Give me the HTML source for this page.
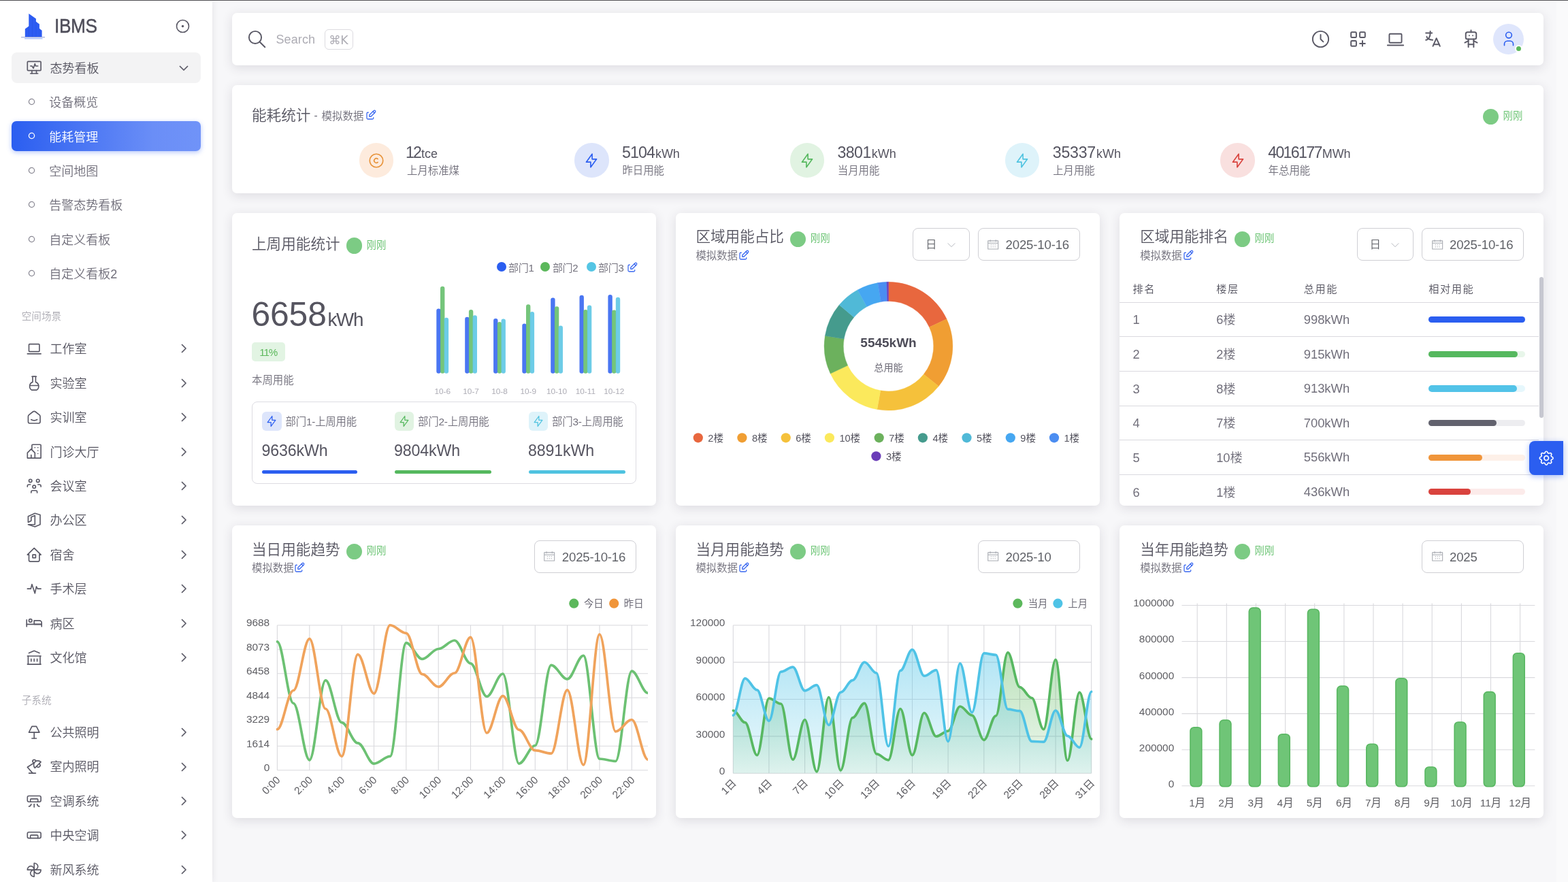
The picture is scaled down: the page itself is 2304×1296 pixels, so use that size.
<!DOCTYPE html>
<html lang="zh-CN"><head><meta charset="utf-8"><title>IBMS</title><style>
*{box-sizing:border-box;margin:0;padding:0}
html,body{width:2304px;height:1296px;overflow:hidden}
body{background:#f7f7f9;font-family:"Liberation Sans","Noto Sans CJK SC",sans-serif;color:#4e4d59;position:relative;font-weight:350}
#root{position:absolute;left:0;top:0;width:2304px;height:1296px;will-change:transform;transform:translateZ(0)}
.a{position:absolute;white-space:nowrap}
.card{position:absolute;background:#fff;border-radius:7.2px;box-shadow:0 3.6px 16px rgba(47,43,61,.125)}
svg{position:absolute;overflow:visible}
.t{position:absolute;white-space:nowrap}
.dot{position:absolute;border-radius:50%}
.fld{position:absolute;border:1.2px solid #cfcfd4;border-radius:8px;background:#fff;height:47.5px}
.cht text{font-family:"Liberation Sans","Noto Sans CJK SC",sans-serif;font-size:15.4px;fill:#5e5e63;font-weight:400}
</style></head><body><div id="root">
<div class="a" style="left:0;top:0;width:2304px;height:1.1px;background:#4f4e52"></div><div class="a" style="left:0;top:1.1px;width:2304px;height:1.1px;background:#fdfdfe"></div>
<div class="a" style="left:2286.6px;top:2.2px;width:17.4px;height:1294px;background:#fafafb"></div>
<div class="a" style="left:0;top:1px;width:312px;height:1295px;background:#fff;box-shadow:0 0 10px rgba(47,43,61,.10)"></div>
<svg style="left:30px;top:18px" width="38" height="40" viewBox="0 0 38 40"><path d="M6.8 36.4V24.5L12.3 20.6V2.1L22.9 9.5V13.8L27.9 17.5V24.1L31.6 26.7V36.4z" fill="#2d5cf2"/><path d="M12.3 20.6V36.4M17.5 8V36.4M22.9 13.8V36.4M27.9 24V36.4" stroke="#2450dd" stroke-width=".7" fill="none" opacity=".6"/><path d="M1 36.7h35" stroke="#8c9bd6" stroke-width="1.1" fill="none"/><path d="M6 38.8h26.5" stroke="#8aa8f7" stroke-width="1" fill="none"/></svg>
<div class="t" style="left:79.6px;top:18.3px;font-size:29.6px;line-height:40px;color:#4f4e5a;letter-spacing:-.45px;transform:scaleX(.888);transform-origin:0 50%;-webkit-text-stroke:.5px #4f4e5a;">IBMS</div>
<svg style="left:258px;top:28px" width="21" height="21" viewBox="0 0 21 21"><circle cx="10.5" cy="10.5" r="9" fill="none" stroke="#5a5966" stroke-width="1.6"/><circle cx="10.5" cy="10.5" r="1.7" fill="#5a5966"/></svg>
<div class="a" style="left:17px;top:77px;width:278px;height:44.5px;border-radius:8px;background:#f3f3f4"></div>
<svg style="left:36.8px;top:85.8px" width="26.4" height="26.4" viewBox="0 0 24 24" fill="none" stroke="#5a5966" stroke-width="1.5" stroke-linecap="round" stroke-linejoin="round"><path d="M3 5a1 1 0 0 1 1 -1h16a1 1 0 0 1 1 1v10a1 1 0 0 1 -1 1h-16a1 1 0 0 1 -1 -1z"/><path d="M7 20h10"/><path d="M9 16v4"/><path d="M15 16v4"/><path d="M7 10h2l2 3l2 -6l1 3h3"/></svg>
<div class="t" style="left:73.5px;top:87.7px;font-size:18px;line-height:27px;color:#565561;">态势看板</div>
<svg style="left:258.0px;top:87.5px" width="24" height="24" viewBox="0 0 24 24" fill="none" stroke="#5a5966" stroke-width="1.7" stroke-linecap="butt" stroke-linejoin="round"><path d="M6 9l6 6l6 -6"/></svg>
<svg style="left:39.5px;top:143.0px" width="13" height="13" viewBox="0 0 13 13"><circle cx="6.5" cy="6.5" r="4.1" fill="none" stroke="#8b8a95" stroke-width="1.3"/></svg>
<div class="t" style="left:72.3px;top:138.2px;font-size:18px;line-height:27px;color:#716f7b;">设备概览</div>
<div class="a" style="left:17px;top:177.7px;width:278px;height:44.6px;border-radius:7px;background:linear-gradient(270deg,#7093f8 0%,#6a8ef7 25%,#2b5ef0 100%);box-shadow:0 2px 7px rgba(45,95,242,.35)"></div>
<svg style="left:39.5px;top:193.4px" width="13" height="13" viewBox="0 0 13 13"><circle cx="6.5" cy="6.5" r="4.1" fill="none" stroke="#fff" stroke-width="1.3"/></svg>
<div class="t" style="left:72.3px;top:188.6px;font-size:18px;line-height:27px;color:#fff;">能耗管理</div>
<svg style="left:39.5px;top:243.8px" width="13" height="13" viewBox="0 0 13 13"><circle cx="6.5" cy="6.5" r="4.1" fill="none" stroke="#8b8a95" stroke-width="1.3"/></svg>
<div class="t" style="left:72.3px;top:239.0px;font-size:18px;line-height:27px;color:#716f7b;">空间地图</div>
<svg style="left:39.5px;top:294.2px" width="13" height="13" viewBox="0 0 13 13"><circle cx="6.5" cy="6.5" r="4.1" fill="none" stroke="#8b8a95" stroke-width="1.3"/></svg>
<div class="t" style="left:72.3px;top:289.4px;font-size:18px;line-height:27px;color:#716f7b;">告警态势看板</div>
<svg style="left:39.5px;top:344.6px" width="13" height="13" viewBox="0 0 13 13"><circle cx="6.5" cy="6.5" r="4.1" fill="none" stroke="#8b8a95" stroke-width="1.3"/></svg>
<div class="t" style="left:72.3px;top:339.8px;font-size:18px;line-height:27px;color:#716f7b;">自定义看板</div>
<svg style="left:39.5px;top:395.0px" width="13" height="13" viewBox="0 0 13 13"><circle cx="6.5" cy="6.5" r="4.1" fill="none" stroke="#8b8a95" stroke-width="1.3"/></svg>
<div class="t" style="left:72.3px;top:390.2px;font-size:18px;line-height:27px;color:#716f7b;">自定义看板2</div>
<div class="t" style="left:31.7px;top:454.2px;font-size:14.6px;line-height:22px;color:#adacb4;">空间场景</div>
<svg style="left:37.0px;top:499.2px" width="26.4" height="26.4" viewBox="0 0 24 24" fill="none" stroke="#5a5966" stroke-width="1.5" stroke-linecap="round" stroke-linejoin="round"><path d="M3 19l18 0"/><path d="M5 7a1 1 0 0 1 1 -1h12a1 1 0 0 1 1 1v8a1 1 0 0 1 -1 1h-12a1 1 0 0 1 -1 -1z"/></svg>
<div class="t" style="left:73.5px;top:500.3px;font-size:18px;line-height:27px;color:#565561;">工作室</div>
<svg style="left:258.0px;top:500.4px" width="24" height="24" viewBox="0 0 24 24" fill="none" stroke="#5a5966" stroke-width="1.7" stroke-linecap="butt" stroke-linejoin="round"><path d="M9 6l6 6l-6 6"/></svg>
<svg style="left:37.0px;top:549.6px" width="26.4" height="26.4" viewBox="0 0 24 24" fill="none" stroke="#5a5966" stroke-width="1.5" stroke-linecap="round" stroke-linejoin="round"><path d="M6.1 15h11.8"/><path d="M14 3v7.342a6 6 0 0 1 1.318 10.658h-6.635a6 6 0 0 1 1.317 -10.66v-7.34h4z"/><path d="M9 3h6"/></svg>
<div class="t" style="left:73.5px;top:550.7px;font-size:18px;line-height:27px;color:#565561;">实验室</div>
<svg style="left:258.0px;top:550.8px" width="24" height="24" viewBox="0 0 24 24" fill="none" stroke="#5a5966" stroke-width="1.7" stroke-linecap="butt" stroke-linejoin="round"><path d="M9 6l6 6l-6 6"/></svg>
<svg style="left:37.0px;top:600.0px" width="26.4" height="26.4" viewBox="0 0 24 24" fill="none" stroke="#5a5966" stroke-width="1.5" stroke-linecap="round" stroke-linejoin="round"><path d="M19 8.71l-5.333 -4.148a2.666 2.666 0 0 0 -3.274 0l-5.334 4.148a2.665 2.665 0 0 0 -1.029 2.105v7.2a2 2 0 0 0 2 2h12a2 2 0 0 0 2 -2v-7.2c0 -.823 -.38 -1.6 -1.03 -2.105"/><path d="M16 15c-2.21 1.333 -5.792 1.333 -8 0"/></svg>
<div class="t" style="left:73.5px;top:601.1px;font-size:18px;line-height:27px;color:#565561;">实训室</div>
<svg style="left:258.0px;top:601.2px" width="24" height="24" viewBox="0 0 24 24" fill="none" stroke="#5a5966" stroke-width="1.7" stroke-linecap="butt" stroke-linejoin="round"><path d="M9 6l6 6l-6 6"/></svg>
<svg style="left:37.0px;top:650.4px" width="26.4" height="26.4" viewBox="0 0 24 24" fill="none" stroke="#5a5966" stroke-width="1.5" stroke-linecap="round" stroke-linejoin="round"><path d="M8 9l5 5v7h-5v-4m0 4h-5v-7l5 -5m1 1v-6a1 1 0 0 1 1 -1h10a1 1 0 0 1 1 1v17h-8"/><path d="M13 7l0 .01"/><path d="M17 7l0 .01"/><path d="M17 11l0 .01"/><path d="M17 15l0 .01"/></svg>
<div class="t" style="left:73.5px;top:651.5px;font-size:18px;line-height:27px;color:#565561;">门诊大厅</div>
<svg style="left:258.0px;top:651.6px" width="24" height="24" viewBox="0 0 24 24" fill="none" stroke="#5a5966" stroke-width="1.7" stroke-linecap="butt" stroke-linejoin="round"><path d="M9 6l6 6l-6 6"/></svg>
<svg style="left:37.0px;top:700.8px" width="26.4" height="26.4" viewBox="0 0 24 24" fill="none" stroke="#5a5966" stroke-width="1.5" stroke-linecap="round" stroke-linejoin="round"><path d="M10 13a2 2 0 1 0 4 0a2 2 0 0 0 -4 0"/><path d="M8 21v-1a2 2 0 0 1 2 -2h4a2 2 0 0 1 2 2v1"/><path d="M15 5a2 2 0 1 0 4 0a2 2 0 0 0 -4 0"/><path d="M17 10h2a2 2 0 0 1 2 2v1"/><path d="M5 5a2 2 0 1 0 4 0a2 2 0 0 0 -4 0"/><path d="M3 13v-1a2 2 0 0 1 2 -2h2"/></svg>
<div class="t" style="left:73.5px;top:701.9px;font-size:18px;line-height:27px;color:#565561;">会议室</div>
<svg style="left:258.0px;top:702.0px" width="24" height="24" viewBox="0 0 24 24" fill="none" stroke="#5a5966" stroke-width="1.7" stroke-linecap="butt" stroke-linejoin="round"><path d="M9 6l6 6l-6 6"/></svg>
<svg style="left:37.0px;top:751.2px" width="26.4" height="26.4" viewBox="0 0 24 24" fill="none" stroke="#5a5966" stroke-width="1.5" stroke-linecap="round" stroke-linejoin="round"><path d="M4 18h9v-12l-5 2v5l-4 2v-8l9 -4l7 2v13l-7 3z"/></svg>
<div class="t" style="left:73.5px;top:752.3px;font-size:18px;line-height:27px;color:#565561;">办公区</div>
<svg style="left:258.0px;top:752.4px" width="24" height="24" viewBox="0 0 24 24" fill="none" stroke="#5a5966" stroke-width="1.7" stroke-linecap="butt" stroke-linejoin="round"><path d="M9 6l6 6l-6 6"/></svg>
<svg style="left:37.0px;top:801.6px" width="26.4" height="26.4" viewBox="0 0 24 24" fill="none" stroke="#5a5966" stroke-width="1.5" stroke-linecap="round" stroke-linejoin="round"><path d="M5 12l-2 0l9 -9l9 9l-2 0"/><path d="M5 12v7a2 2 0 0 0 2 2h10a2 2 0 0 0 2 -2v-7"/><path d="M10 12h4v4h-4z"/></svg>
<div class="t" style="left:73.5px;top:802.7px;font-size:18px;line-height:27px;color:#565561;">宿舍</div>
<svg style="left:258.0px;top:802.8px" width="24" height="24" viewBox="0 0 24 24" fill="none" stroke="#5a5966" stroke-width="1.7" stroke-linecap="butt" stroke-linejoin="round"><path d="M9 6l6 6l-6 6"/></svg>
<svg style="left:37.0px;top:852.0px" width="26.4" height="26.4" viewBox="0 0 24 24" fill="none" stroke="#5a5966" stroke-width="1.5" stroke-linecap="round" stroke-linejoin="round"><path d="M3 12h4.5l1.5 -6l4 12l2 -9l1.5 3h4.5"/></svg>
<div class="t" style="left:73.5px;top:853.1px;font-size:18px;line-height:27px;color:#565561;">手术层</div>
<svg style="left:258.0px;top:853.2px" width="24" height="24" viewBox="0 0 24 24" fill="none" stroke="#5a5966" stroke-width="1.7" stroke-linecap="butt" stroke-linejoin="round"><path d="M9 6l6 6l-6 6"/></svg>
<svg style="left:37.0px;top:902.4px" width="26.4" height="26.4" viewBox="0 0 24 24" fill="none" stroke="#5a5966" stroke-width="1.5" stroke-linecap="round" stroke-linejoin="round"><path d="M5 9a2 2 0 1 0 4 0a2 2 0 1 0 -4 0"/><path d="M22 17v-3h-20"/><path d="M2 8v9"/><path d="M12 14h10v-2a3 3 0 0 0 -3 -3h-7v5z"/></svg>
<div class="t" style="left:73.5px;top:903.5px;font-size:18px;line-height:27px;color:#565561;">病区</div>
<svg style="left:258.0px;top:903.6px" width="24" height="24" viewBox="0 0 24 24" fill="none" stroke="#5a5966" stroke-width="1.7" stroke-linecap="butt" stroke-linejoin="round"><path d="M9 6l6 6l-6 6"/></svg>
<svg style="left:37.0px;top:952.8px" width="26.4" height="26.4" viewBox="0 0 24 24" fill="none" stroke="#5a5966" stroke-width="1.5" stroke-linecap="round" stroke-linejoin="round"><path d="M3 21l18 0"/><path d="M3 10l18 0"/><path d="M5 6l7 -3l7 3"/><path d="M4 10l0 11"/><path d="M20 10l0 11"/><path d="M8 14l0 3"/><path d="M12 14l0 3"/><path d="M16 14l0 3"/></svg>
<div class="t" style="left:73.5px;top:953.9px;font-size:18px;line-height:27px;color:#565561;">文化馆</div>
<svg style="left:258.0px;top:954.0px" width="24" height="24" viewBox="0 0 24 24" fill="none" stroke="#5a5966" stroke-width="1.7" stroke-linecap="butt" stroke-linejoin="round"><path d="M9 6l6 6l-6 6"/></svg>
<div class="t" style="left:31.7px;top:1017.9px;font-size:14.6px;line-height:22px;color:#adacb4;">子系统</div>
<svg style="left:37.0px;top:1062.9px" width="26.4" height="26.4" viewBox="0 0 24 24" fill="none" stroke="#5a5966" stroke-width="1.5" stroke-linecap="round" stroke-linejoin="round"><path d="M9 20h6"/><path d="M12 20v-8"/><path d="M5 12h14l-4 -8h-6z"/></svg>
<div class="t" style="left:73.5px;top:1064.0px;font-size:18px;line-height:27px;color:#565561;">公共照明</div>
<svg style="left:258.0px;top:1064.1px" width="24" height="24" viewBox="0 0 24 24" fill="none" stroke="#5a5966" stroke-width="1.7" stroke-linecap="butt" stroke-linejoin="round"><path d="M9 6l6 6l-6 6"/></svg>
<svg style="left:37.0px;top:1113.3px" width="26.4" height="26.4" viewBox="0 0 24 24" fill="none" stroke="#5a5966" stroke-width="1.5" stroke-linecap="round" stroke-linejoin="round"><path d="M5 21h9"/><path d="M10 21l-7 -8l8.5 -5.5"/><path d="M13 14c-2.148 -2.148 -2.148 -5.852 0 -8c2.088 -2.088 5.842 -1.972 8 0l-8 8z"/><path d="M11.742 7.574l-1.156 -1.156a2 2 0 0 1 2.828 -2.829l1.144 1.144"/><path d="M15.5 12l.208 .274a2.527 2.527 0 0 0 3.556 0c.939 -.933 .98 -2.42 .122 -3.4l-.366 -.369"/></svg>
<div class="t" style="left:73.5px;top:1114.4px;font-size:18px;line-height:27px;color:#565561;">室内照明</div>
<svg style="left:258.0px;top:1114.5px" width="24" height="24" viewBox="0 0 24 24" fill="none" stroke="#5a5966" stroke-width="1.7" stroke-linecap="butt" stroke-linejoin="round"><path d="M9 6l6 6l-6 6"/></svg>
<svg style="left:37.0px;top:1163.7px" width="26.4" height="26.4" viewBox="0 0 24 24" fill="none" stroke="#5a5966" stroke-width="1.5" stroke-linecap="round" stroke-linejoin="round"><path d="M8 16a3 3 0 0 1 -3 3"/><path d="M16 16a3 3 0 0 0 3 3"/><path d="M12 16v4"/><path d="M3 7a2 2 0 0 1 2 -2h14a2 2 0 0 1 2 2v4a2 2 0 0 1 -2 2h-14a2 2 0 0 1 -2 -2z"/><path d="M7 13v-3a1 1 0 0 1 1 -1h8a1 1 0 0 1 1 1v3"/></svg>
<div class="t" style="left:73.5px;top:1164.8px;font-size:18px;line-height:27px;color:#565561;">空调系统</div>
<svg style="left:258.0px;top:1164.9px" width="24" height="24" viewBox="0 0 24 24" fill="none" stroke="#5a5966" stroke-width="1.7" stroke-linecap="butt" stroke-linejoin="round"><path d="M9 6l6 6l-6 6"/></svg>
<svg style="left:37.0px;top:1214.1px" width="26.4" height="26.4" viewBox="0 0 24 24" fill="none" stroke="#5a5966" stroke-width="1.5" stroke-linecap="round" stroke-linejoin="round"><path d="M3 10a2 2 0 0 1 2 -2h14a2 2 0 0 1 2 2v4a2 2 0 0 1 -2 2h-14a2 2 0 0 1 -2 -2z"/><path d="M7 16v-3a1 1 0 0 1 1 -1h8a1 1 0 0 1 1 1v3"/></svg>
<div class="t" style="left:73.5px;top:1215.2px;font-size:18px;line-height:27px;color:#565561;">中央空调</div>
<svg style="left:258.0px;top:1215.3px" width="24" height="24" viewBox="0 0 24 24" fill="none" stroke="#5a5966" stroke-width="1.7" stroke-linecap="butt" stroke-linejoin="round"><path d="M9 6l6 6l-6 6"/></svg>
<svg style="left:37.0px;top:1264.5px" width="26.4" height="26.4" viewBox="0 0 24 24" fill="none" stroke="#5a5966" stroke-width="1.5" stroke-linecap="round" stroke-linejoin="round"><path d="M12 12c2.76 0 5 -2.01 5 -4.5s-2.24 -4.5 -5 -4.5v9z"/><path d="M12 12c0 2.76 2.01 5 4.5 5s4.5 -2.24 4.5 -5h-9z"/><path d="M12 12c-2.76 0 -5 2.01 -5 4.5s2.24 4.5 5 4.5v-9z"/><path d="M12 12c0 -2.76 -2.01 -5 -4.5 -5s-4.5 2.24 -4.5 5h9z"/></svg>
<div class="t" style="left:73.5px;top:1265.6px;font-size:18px;line-height:27px;color:#565561;">新风系统</div>
<svg style="left:258.0px;top:1265.7px" width="24" height="24" viewBox="0 0 24 24" fill="none" stroke="#5a5966" stroke-width="1.7" stroke-linecap="butt" stroke-linejoin="round"><path d="M9 6l6 6l-6 6"/></svg>
<div class="card" style="left:340.8px;top:19.2px;width:1927.2px;height:76.8px"></div>
<svg style="left:362.4px;top:41.7px" width="31.2" height="31.2" viewBox="0 0 24 24" fill="none" stroke="#5a5966" stroke-width="1.5" stroke-linecap="round" stroke-linejoin="round"><path d="M3 10a7 7 0 1 0 14 0a7 7 0 1 0 -14 0"/><path d="M21 21l-6 -6"/></svg>
<div class="t" style="left:405.5px;top:44.5px;font-size:18px;line-height:27px;color:#adacb4;letter-spacing:.1px;">Search</div>
<div class="a" style="left:477px;top:42.5px;width:42px;height:30px;border:1px solid #dcdbe0;border-radius:6px"></div>
<div class="t" style="left:483.3px;top:46.3px;font-size:17px;line-height:26px;color:#adacb4;font-family:'DejaVu Sans','Liberation Sans',sans-serif;font-weight:400;letter-spacing:-.4px;font-size:17.4px;">⌘K</div>
<svg style="left:1925.0px;top:41.9px" width="31" height="31" viewBox="0 0 24 24" fill="none" stroke="#5a5966" stroke-width="1.5" stroke-linecap="round" stroke-linejoin="round"><path d="M3 12a9 9 0 1 0 18 0a9 9 0 0 0 -18 0"/><path d="M12 7v5l3 3"/></svg>
<svg style="left:1980.0px;top:41.9px" width="31" height="31" viewBox="0 0 24 24" fill="none" stroke="#5a5966" stroke-width="1.5" stroke-linecap="round" stroke-linejoin="round"><path d="M4 5a1 1 0 0 1 1 -1h4a1 1 0 0 1 1 1v4a1 1 0 0 1 -1 1h-4a1 1 0 0 1 -1 -1z"/><path d="M14 5a1 1 0 0 1 1 -1h4a1 1 0 0 1 1 1v4a1 1 0 0 1 -1 1h-4a1 1 0 0 1 -1 -1z"/><path d="M4 15a1 1 0 0 1 1 -1h4a1 1 0 0 1 1 1v4a1 1 0 0 1 -1 1h-4a1 1 0 0 1 -1 -1z"/><path d="M14 17h6m-3 -3v6"/></svg>
<svg style="left:2035.2px;top:41.9px" width="31" height="31" viewBox="0 0 24 24" fill="none" stroke="#5a5966" stroke-width="1.5" stroke-linecap="round" stroke-linejoin="round"><path d="M3 19l18 0"/><path d="M5 7a1 1 0 0 1 1 -1h12a1 1 0 0 1 1 1v8a1 1 0 0 1 -1 1h-12a1 1 0 0 1 -1 -1z"/></svg>
<svg style="left:2090.2px;top:41.9px" width="31" height="31" viewBox="0 0 24 24" fill="none" stroke="#5a5966" stroke-width="1.5" stroke-linecap="round" stroke-linejoin="round"><path d="M4 5h7"/><path d="M9 3v2c0 4.418 -2.239 8 -5 8"/><path d="M5 9c0 2.144 2.952 3.908 6.7 4"/><path d="M12 20l4 -9l4 9"/><path d="M19.1 18h-6.2"/></svg>
<svg style="left:2145.8px;top:41.9px" width="31" height="31" viewBox="0 0 24 24" fill="none" stroke="#5a5966" stroke-width="1.5" stroke-linecap="round" stroke-linejoin="round"><path d="M6 6a2 2 0 0 1 2 -2h8a2 2 0 0 1 2 2v4a2 2 0 0 1 -2 2h-8a2 2 0 0 1 -2 -2z"/><path d="M12 2v2"/><path d="M9 12v9"/><path d="M15 12v9"/><path d="M5 16l4 -2"/><path d="M15 14l4 2"/><path d="M9 18h6"/><path d="M10 8v.01"/><path d="M14 8v.01"/></svg>
<div class="dot" style="left:2193.7px;top:34.8px;width:45.6px;height:45.6px;background:#dfe6fc"></div>
<svg style="left:2203.5px;top:44.1px" width="26" height="26" viewBox="0 0 24 24" fill="none" stroke="#2b5ef0" stroke-width="1.5" stroke-linecap="round" stroke-linejoin="round"><path d="M8 7a4 4 0 1 0 8 0a4 4 0 0 0 -8 0"/><path d="M6 21v-2a4 4 0 0 1 4 -4h4a4 4 0 0 1 4 4v2"/></svg>
<div class="dot" style="left:2225.5px;top:66.2px;width:11px;height:11px;background:#5cb85c;border:2px solid #fff"></div>
<div class="card" style="left:340.8px;top:124.8px;width:1927.2px;height:158.8px"></div>
<div class="t" style="left:370.0px;top:153.9px;font-size:21.6px;line-height:32px;color:#565561;">能耗统计</div>
<div class="t" style="left:461.5px;top:158.0px;font-size:15.6px;line-height:23px;color:#716f7b;">-</div>
<div class="t" style="left:472.6px;top:158.8px;font-size:15.5px;line-height:23px;color:#716f7b;">模拟数据</div>
<svg style="left:536.1px;top:160.0px" width="18" height="18" viewBox="0 0 24 24" fill="none" stroke="#3a68f0" stroke-width="1.7" stroke-linecap="round" stroke-linejoin="round"><path d="M7 7h-1a2 2 0 0 0 -2 2v9a2 2 0 0 0 2 2h9a2 2 0 0 0 2 -2v-1"/><path d="M20.385 6.585a2.1 2.1 0 0 0 -2.97 -2.97l-8.415 8.385v3h3l8.385 -8.415z"/><path d="M16 5l3 3"/></svg>
<div class="dot" style="left:2178.8px;top:159.8px;width:23.4px;height:23.4px;background:#7ccb84"></div>
<div class="t" style="left:2208.5px;top:159.0px;font-size:14.4px;line-height:22px;color:#62c06b;">刚刚</div>
<div class="dot" style="left:527.8px;top:210.3px;width:50.4px;height:50.4px;background:#fdebdd"></div>
<svg style="left:540.0px;top:222.5px" width="26" height="26" viewBox="0 0 24 24" fill="none" stroke="#e8933a" stroke-width="1.5" stroke-linecap="round" stroke-linejoin="round"><path d="M3 12a9 9 0 1 0 18 0a9 9 0 1 0 -18 0"/><path d="M14 9.75a3.016 3.016 0 0 0 -4.163 .173a2.993 2.993 0 0 0 0 4.154a3.016 3.016 0 0 0 4.163 .173"/></svg>
<div class="t" style="left:596.0px;top:209.2px;font-size:23.2px;line-height:30px;color:#565561;"><span style="letter-spacing:-1.9px">12</span><span style="font-size:18px;letter-spacing:0px;margin-left:1px">tce</span></div>
<div class="t" style="left:598.0px;top:238.8px;font-size:15.4px;line-height:23px;color:#716f7b;">上月标准煤</div>
<div class="dot" style="left:844.2px;top:210.3px;width:50.4px;height:50.4px;background:#dde5fb"></div>
<svg style="left:856.4px;top:222.5px" width="26" height="26" viewBox="0 0 24 24" fill="none" stroke="#2b5ef0" stroke-width="1.5" stroke-linecap="round" stroke-linejoin="round"><path d="M13 3l0 7l6 0l-8 11l0 -7l-6 0l8 -11"/></svg>
<div class="t" style="left:914.0px;top:209.2px;font-size:23.2px;line-height:30px;color:#565561;"><span style="letter-spacing:-0.93px">5104</span><span style="font-size:18px;letter-spacing:0px;margin-left:1px">kWh</span></div>
<div class="t" style="left:914.4px;top:238.8px;font-size:15.4px;line-height:23px;color:#716f7b;">昨日用能</div>
<div class="dot" style="left:1160.6px;top:210.3px;width:50.4px;height:50.4px;background:#e1f3e2"></div>
<svg style="left:1172.8px;top:222.5px" width="26" height="26" viewBox="0 0 24 24" fill="none" stroke="#55b85e" stroke-width="1.5" stroke-linecap="round" stroke-linejoin="round"><path d="M13 3l0 7l6 0l-8 11l0 -7l-6 0l8 -11"/></svg>
<div class="t" style="left:1230.4px;top:209.2px;font-size:23.2px;line-height:30px;color:#565561;"><span style="letter-spacing:-0.53px">3801</span><span style="font-size:18px;letter-spacing:0px;margin-left:1px">kWh</span></div>
<div class="t" style="left:1230.8px;top:238.8px;font-size:15.4px;line-height:23px;color:#716f7b;">当月用能</div>
<div class="dot" style="left:1477.0px;top:210.3px;width:50.4px;height:50.4px;background:#def3fa"></div>
<svg style="left:1489.2px;top:222.5px" width="26" height="26" viewBox="0 0 24 24" fill="none" stroke="#4fc3e0" stroke-width="1.5" stroke-linecap="round" stroke-linejoin="round"><path d="M13 3l0 7l6 0l-8 11l0 -7l-6 0l8 -11"/></svg>
<div class="t" style="left:1546.8px;top:209.2px;font-size:23.2px;line-height:30px;color:#565561;"><span style="letter-spacing:-0.26px">35337</span><span style="font-size:18px;letter-spacing:0px;margin-left:1px">kWh</span></div>
<div class="t" style="left:1547.2px;top:238.8px;font-size:15.4px;line-height:23px;color:#716f7b;">上月用能</div>
<div class="dot" style="left:1793.4px;top:210.3px;width:50.4px;height:50.4px;background:#f9e0df"></div>
<svg style="left:1805.6px;top:222.5px" width="26" height="26" viewBox="0 0 24 24" fill="none" stroke="#d9433e" stroke-width="1.5" stroke-linecap="round" stroke-linejoin="round"><path d="M13 3l0 7l6 0l-8 11l0 -7l-6 0l8 -11"/></svg>
<div class="t" style="left:1863.2px;top:209.2px;font-size:23.2px;line-height:30px;color:#565561;"><span style="letter-spacing:-1.69px">4016177</span><span style="font-size:18px;letter-spacing:0px;margin-left:1px">MWh</span></div>
<div class="t" style="left:1863.6px;top:238.8px;font-size:15.4px;line-height:23px;color:#716f7b;">年总用能</div>
<div class="card" style="left:340.8px;top:312.5px;width:623.2px;height:430.2px"></div>
<div class="card" style="left:340.8px;top:771.6px;width:623.2px;height:430.4px"></div>
<div class="card" style="left:992.8px;top:312.5px;width:623.2px;height:430.2px"></div>
<div class="card" style="left:992.8px;top:771.6px;width:623.2px;height:430.4px"></div>
<div class="card" style="left:1644.8px;top:312.5px;width:623.2px;height:430.2px"></div>
<div class="card" style="left:1644.8px;top:771.6px;width:623.2px;height:430.4px"></div>
<div class="t" style="left:370.0px;top:343.3px;font-size:21.6px;line-height:32px;color:#565561;">上周用能统计</div>
<div class="dot" style="left:508.9px;top:349.3px;width:23.4px;height:23.4px;background:#7ccb84"></div>
<div class="t" style="left:538.6px;top:348.5px;font-size:14.4px;line-height:22px;color:#62c06b;">刚刚</div>
<div class="dot" style="left:729.5px;top:385.3px;width:14px;height:14px;background:#2b5ef0"></div>
<div class="t" style="left:747.0px;top:382.5px;font-size:15px;line-height:22px;color:#716f7b;letter-spacing:-.3px;">部门1</div>
<div class="dot" style="left:794.4px;top:385.3px;width:14px;height:14px;background:#5cb85c"></div>
<div class="t" style="left:811.9px;top:382.5px;font-size:15px;line-height:22px;color:#716f7b;letter-spacing:-.3px;">部门2</div>
<div class="dot" style="left:861.5px;top:385.3px;width:14px;height:14px;background:#55c5e4"></div>
<div class="t" style="left:879.0px;top:382.5px;font-size:15px;line-height:22px;color:#716f7b;letter-spacing:-.3px;">部门3</div>
<svg style="left:919.8px;top:383.8px" width="18" height="18" viewBox="0 0 24 24" fill="none" stroke="#3a68f0" stroke-width="1.7" stroke-linecap="round" stroke-linejoin="round"><path d="M7 7h-1a2 2 0 0 0 -2 2v9a2 2 0 0 0 2 2h9a2 2 0 0 0 2 -2v-1"/><path d="M20.385 6.585a2.1 2.1 0 0 0 -2.97 -2.97l-8.415 8.385v3h3l8.385 -8.415z"/><path d="M16 5l3 3"/></svg>
<div class="t" style="left:369.4px;top:432.0px;font-size:49.8px;line-height:60px;color:#55545f;letter-spacing:-.1px;">6658<span style="font-size:27.8px;letter-spacing:-1.2px;margin-left:1.6px">kWh</span></div>
<div class="a" style="left:369.8px;top:503px;width:49px;height:28.4px;border-radius:5px;background:#e2f4e3"></div>
<div class="t" style="left:381.3px;top:505.5px;font-size:15.2px;line-height:23px;color:#5cb85c;letter-spacing:-1.1px;">11%</div>
<div class="t" style="left:370.0px;top:546.7px;font-size:15.4px;line-height:23px;color:#716f7b;">本周用能</div>
<svg class="cht" style="left:0;top:0" width="2304" height="1296" viewBox="0 0 2304 1296"><line x1="644.5" x2="644.5" y1="456.6" y2="545.6" stroke="#3d6cf2" stroke-width="6.4" stroke-linecap="round" opacity=".93"/><line x1="650.2" x2="650.2" y1="423.9" y2="545.6" stroke="#6bc172" stroke-width="6.4" stroke-linecap="round" opacity=".93"/><line x1="655.9" x2="655.9" y1="470.0" y2="545.6" stroke="#62c9e6" stroke-width="6.4" stroke-linecap="round" opacity=".93"/><text x="650.2" y="579.2" text-anchor="middle" style="font-size:11.8px;fill:#adacb5">10-6</text><line x1="686.4" x2="686.4" y1="469.0" y2="545.6" stroke="#3d6cf2" stroke-width="6.4" stroke-linecap="round" opacity=".93"/><line x1="692.1" x2="692.1" y1="458.3" y2="545.6" stroke="#6bc172" stroke-width="6.4" stroke-linecap="round" opacity=".93"/><line x1="697.8" x2="697.8" y1="466.5" y2="545.6" stroke="#62c9e6" stroke-width="6.4" stroke-linecap="round" opacity=".93"/><text x="692.1" y="579.2" text-anchor="middle" style="font-size:11.8px;fill:#adacb5">10-7</text><line x1="728.3" x2="728.3" y1="471.1" y2="545.6" stroke="#3d6cf2" stroke-width="6.4" stroke-linecap="round" opacity=".93"/><line x1="734.0" x2="734.0" y1="476.1" y2="545.6" stroke="#6bc172" stroke-width="6.4" stroke-linecap="round" opacity=".93"/><line x1="739.7" x2="739.7" y1="471.8" y2="545.6" stroke="#62c9e6" stroke-width="6.4" stroke-linecap="round" opacity=".93"/><text x="734.0" y="579.2" text-anchor="middle" style="font-size:11.8px;fill:#adacb5">10-8</text><line x1="770.5" x2="770.5" y1="478.6" y2="545.6" stroke="#3d6cf2" stroke-width="6.4" stroke-linecap="round" opacity=".93"/><line x1="776.2" x2="776.2" y1="450.5" y2="545.6" stroke="#6bc172" stroke-width="6.4" stroke-linecap="round" opacity=".93"/><line x1="781.9" x2="781.9" y1="461.2" y2="545.6" stroke="#62c9e6" stroke-width="6.4" stroke-linecap="round" opacity=".93"/><text x="776.2" y="579.2" text-anchor="middle" style="font-size:11.8px;fill:#adacb5">10-9</text><line x1="812.4" x2="812.4" y1="440.6" y2="545.6" stroke="#3d6cf2" stroke-width="6.4" stroke-linecap="round" opacity=".93"/><line x1="818.1" x2="818.1" y1="453.4" y2="545.6" stroke="#6bc172" stroke-width="6.4" stroke-linecap="round" opacity=".93"/><line x1="823.8" x2="823.8" y1="481.8" y2="545.6" stroke="#62c9e6" stroke-width="6.4" stroke-linecap="round" opacity=".93"/><text x="818.1" y="579.2" text-anchor="middle" style="font-size:11.8px;fill:#adacb5">10-10</text><line x1="854.7" x2="854.7" y1="437.0" y2="545.6" stroke="#3d6cf2" stroke-width="6.4" stroke-linecap="round" opacity=".93"/><line x1="860.4" x2="860.4" y1="458.3" y2="545.6" stroke="#6bc172" stroke-width="6.4" stroke-linecap="round" opacity=".93"/><line x1="866.1" x2="866.1" y1="451.6" y2="545.6" stroke="#62c9e6" stroke-width="6.4" stroke-linecap="round" opacity=".93"/><text x="860.4" y="579.2" text-anchor="middle" style="font-size:11.8px;fill:#adacb5">10-11</text><line x1="896.6" x2="896.6" y1="436.3" y2="545.6" stroke="#3d6cf2" stroke-width="6.4" stroke-linecap="round" opacity=".93"/><line x1="902.3" x2="902.3" y1="458.7" y2="545.6" stroke="#6bc172" stroke-width="6.4" stroke-linecap="round" opacity=".93"/><line x1="908.0" x2="908.0" y1="439.9" y2="545.6" stroke="#62c9e6" stroke-width="6.4" stroke-linecap="round" opacity=".93"/><text x="902.3" y="579.2" text-anchor="middle" style="font-size:11.8px;fill:#adacb5">10-12</text></svg>
<div class="a" style="left:370px;top:590px;width:565.3px;height:121px;border:1px solid #dddce2;border-radius:8px"></div>
<div class="a" style="left:385px;top:604.6px;width:28.8px;height:28.8px;border-radius:6px;background:#dde5fb"></div>
<svg style="left:389.4px;top:609.0px" width="20" height="20" viewBox="0 0 24 24" fill="none" stroke="#2b5ef0" stroke-width="1.5" stroke-linecap="round" stroke-linejoin="round"><path d="M13 3l0 7l6 0l-8 11l0 -7l-6 0l8 -11"/></svg>
<div class="t" style="left:419.5px;top:607.5px;font-size:15.4px;line-height:23px;color:#716f7b;letter-spacing:-.2px;">部门1-上周用能</div>
<div class="t" style="left:384.5px;top:647.3px;font-size:23.2px;line-height:30px;color:#565561;letter-spacing:-.15px;">9636kWh</div>
<div class="a" style="left:385px;top:691px;width:139.5px;height:4.8px;border-radius:3px;background:#2b5ef0"></div>
<div class="a" style="left:579.6px;top:604.6px;width:28.8px;height:28.8px;border-radius:6px;background:#e1f3e2"></div>
<svg style="left:584.0px;top:609.0px" width="20" height="20" viewBox="0 0 24 24" fill="none" stroke="#55b85e" stroke-width="1.5" stroke-linecap="round" stroke-linejoin="round"><path d="M13 3l0 7l6 0l-8 11l0 -7l-6 0l8 -11"/></svg>
<div class="t" style="left:614.1px;top:607.5px;font-size:15.4px;line-height:23px;color:#716f7b;letter-spacing:-.2px;">部门2-上周用能</div>
<div class="t" style="left:579.1px;top:647.3px;font-size:23.2px;line-height:30px;color:#565561;letter-spacing:-.15px;">9804kWh</div>
<div class="a" style="left:579.6px;top:691px;width:142px;height:4.8px;border-radius:3px;background:#55b85e"></div>
<div class="a" style="left:776.6px;top:604.6px;width:28.8px;height:28.8px;border-radius:6px;background:#def3fa"></div>
<svg style="left:781.0px;top:609.0px" width="20" height="20" viewBox="0 0 24 24" fill="none" stroke="#4fc3e0" stroke-width="1.5" stroke-linecap="round" stroke-linejoin="round"><path d="M13 3l0 7l6 0l-8 11l0 -7l-6 0l8 -11"/></svg>
<div class="t" style="left:811.1px;top:607.5px;font-size:15.4px;line-height:23px;color:#716f7b;letter-spacing:-.2px;">部门3-上周用能</div>
<div class="t" style="left:776.1px;top:647.3px;font-size:23.2px;line-height:30px;color:#565561;letter-spacing:-.15px;">8891kWh</div>
<div class="a" style="left:776.6px;top:691px;width:142.7px;height:4.8px;border-radius:3px;background:#4fc3e0"></div>
<div class="t" style="left:1022.4px;top:332.0px;font-size:21.6px;line-height:32px;color:#565561;">区域用能占比</div>
<div class="dot" style="left:1161.1px;top:339.8px;width:23.4px;height:23.4px;background:#7ccb84"></div>
<div class="t" style="left:1190.8px;top:339.0px;font-size:14.4px;line-height:22px;color:#62c06b;">刚刚</div>
<div class="t" style="left:1022.4px;top:364.1px;font-size:15.4px;line-height:23px;color:#716f7b;">模拟数据</div>
<svg style="left:1083.8px;top:366.3px" width="18" height="18" viewBox="0 0 24 24" fill="none" stroke="#3a68f0" stroke-width="1.7" stroke-linecap="round" stroke-linejoin="round"><path d="M7 7h-1a2 2 0 0 0 -2 2v9a2 2 0 0 0 2 2h9a2 2 0 0 0 2 -2v-1"/><path d="M20.385 6.585a2.1 2.1 0 0 0 -2.97 -2.97l-8.415 8.385v3h3l8.385 -8.415z"/><path d="M16 5l3 3"/></svg>
<div class="fld" style="left:1341.1px;top:335.3px;width:83.6px"></div>
<div class="t" style="left:1360.1px;top:347.0px;font-size:16.5px;line-height:25px;color:#606268;">日</div>
<svg style="left:1389.7px;top:351.9px" width="16" height="16" viewBox="0 0 24 24" fill="none" stroke="#a8abb2" stroke-width="1.3" stroke-linecap="round" stroke-linejoin="round"><path d="M4.5 8.5l7.5 7.5l7.5 -7.5"/></svg>
<div class="fld" style="left:1437.0px;top:335.3px;width:150.0px"></div>
<svg style="left:1448.1px;top:347.5px" width="22.4" height="22.4" viewBox="0 0 24 24" fill="none" stroke="#a8abb2" stroke-width="1.15" stroke-linecap="butt" stroke-linejoin="round"><path d="M4 6.3h16v13h-16z"/><path d="M4 9.9h16"/><path d="M7.6 4.5v3.2"/><path d="M16.4 4.5v3.2"/><path d="M8.3 12.6h1.4"/><path d="M11.4 12.6h1.4"/><path d="M14.5 12.6h1.4"/><path d="M8.3 15.9h1.4"/><path d="M11.4 15.9h1.4"/><path d="M14.5 15.9h1.4"/></svg>
<div class="t" style="left:1477.6px;top:345.9px;font-size:18.6px;line-height:28px;color:#606268;letter-spacing:-.17px;">2025-10-16</div>
<svg class="cht" style="left:0;top:0" width="2304" height="1296" viewBox="0 0 2304 1296"><path d="M1305.50,414.30A94.4,94.4 0 0 1 1391.06,468.80L1365.50,480.72A66.2,66.2 0 0 0 1305.50,442.50Z" fill="#e8673e" stroke="#e8673e" stroke-width=".4"/><path d="M1391.06,468.80A94.4,94.4 0 0 1 1379.28,567.59L1357.24,550.00A66.2,66.2 0 0 0 1365.50,480.72Z" fill="#f09e33" stroke="#f09e33" stroke-width=".4"/><path d="M1379.28,567.59A94.4,94.4 0 0 1 1288.78,601.61L1293.78,573.85A66.2,66.2 0 0 0 1357.24,550.00Z" fill="#f5c13b" stroke="#f5c13b" stroke-width=".4"/><path d="M1288.78,601.61A94.4,94.4 0 0 1 1220.15,549.04L1245.65,536.99A66.2,66.2 0 0 0 1293.78,573.85Z" fill="#fbe95c" stroke="#fbe95c" stroke-width=".4"/><path d="M1220.15,549.04A94.4,94.4 0 0 1 1212.34,493.44L1240.17,498.00A66.2,66.2 0 0 0 1245.65,536.99Z" fill="#6cb15d" stroke="#6cb15d" stroke-width=".4"/><path d="M1212.34,493.44A94.4,94.4 0 0 1 1233.19,448.02L1254.79,466.15A66.2,66.2 0 0 0 1240.17,498.00Z" fill="#459b8d" stroke="#459b8d" stroke-width=".4"/><path d="M1233.19,448.02A94.4,94.4 0 0 1 1260.17,425.90L1273.71,450.63A66.2,66.2 0 0 0 1254.79,466.15Z" fill="#50b9d7" stroke="#50b9d7" stroke-width=".4"/><path d="M1260.17,425.90A94.4,94.4 0 0 1 1289.76,415.62L1294.46,443.43A66.2,66.2 0 0 0 1273.71,450.63Z" fill="#46a7f1" stroke="#46a7f1" stroke-width=".4"/><path d="M1289.76,415.62A94.4,94.4 0 0 1 1303.03,414.33L1303.77,442.52A66.2,66.2 0 0 0 1294.46,443.43Z" fill="#4b8df1" stroke="#4b8df1" stroke-width=".4"/><path d="M1303.03,414.33A94.4,94.4 0 0 1 1305.50,414.30L1305.50,442.50A66.2,66.2 0 0 0 1303.77,442.52Z" fill="#6a3db8" stroke="#6a3db8" stroke-width=".4"/><text x="1305.5" y="509.8" text-anchor="middle" style="font-size:19px;font-weight:700;fill:#4d4c58">5545kWh</text><text x="1305.5" y="545" text-anchor="middle" style="font-size:14.2px;fill:#6d6b77">总用能</text><circle cx="1025.8" cy="643.3" r="7.1" fill="#e8673e"/><text x="1040.3" y="648.5" style="font-size:14.6px;fill:#55545f">2楼</text><circle cx="1090.4" cy="643.3" r="7.1" fill="#f09e33"/><text x="1104.9" y="648.5" style="font-size:14.6px;fill:#55545f">8楼</text><circle cx="1154.7" cy="643.3" r="7.1" fill="#f5c13b"/><text x="1169.2" y="648.5" style="font-size:14.6px;fill:#55545f">6楼</text><circle cx="1218.9" cy="643.3" r="7.1" fill="#fbe95c"/><text x="1233.4" y="648.5" style="font-size:14.6px;fill:#55545f">10楼</text><circle cx="1291.7" cy="643.3" r="7.1" fill="#6cb15d"/><text x="1306.2" y="648.5" style="font-size:14.6px;fill:#55545f">7楼</text><circle cx="1355.9" cy="643.3" r="7.1" fill="#459b8d"/><text x="1370.4" y="648.5" style="font-size:14.6px;fill:#55545f">4楼</text><circle cx="1420.5" cy="643.3" r="7.1" fill="#50b9d7"/><text x="1435.0" y="648.5" style="font-size:14.6px;fill:#55545f">5楼</text><circle cx="1484.8" cy="643.3" r="7.1" fill="#46a7f1"/><text x="1499.3" y="648.5" style="font-size:14.6px;fill:#55545f">9楼</text><circle cx="1549" cy="643.3" r="7.1" fill="#4b8df1"/><text x="1563.5" y="648.5" style="font-size:14.6px;fill:#55545f">1楼</text><circle cx="1287.4" cy="670.3" r="7.1" fill="#6a3db8"/><text x="1301.9" y="675.5" style="font-size:14.6px;fill:#55545f">3楼</text></svg>
<div class="t" style="left:1675.2px;top:332.0px;font-size:21.6px;line-height:32px;color:#565561;">区域用能排名</div>
<div class="dot" style="left:1813.9px;top:339.8px;width:23.4px;height:23.4px;background:#7ccb84"></div>
<div class="t" style="left:1843.6px;top:339.0px;font-size:14.4px;line-height:22px;color:#62c06b;">刚刚</div>
<div class="t" style="left:1675.2px;top:364.1px;font-size:15.4px;line-height:23px;color:#716f7b;">模拟数据</div>
<svg style="left:1736.6px;top:366.3px" width="18" height="18" viewBox="0 0 24 24" fill="none" stroke="#3a68f0" stroke-width="1.7" stroke-linecap="round" stroke-linejoin="round"><path d="M7 7h-1a2 2 0 0 0 -2 2v9a2 2 0 0 0 2 2h9a2 2 0 0 0 2 -2v-1"/><path d="M20.385 6.585a2.1 2.1 0 0 0 -2.97 -2.97l-8.415 8.385v3h3l8.385 -8.415z"/><path d="M16 5l3 3"/></svg>
<div class="fld" style="left:1993.5px;top:335.3px;width:83.6px"></div>
<div class="t" style="left:2012.5px;top:347.0px;font-size:16.5px;line-height:25px;color:#606268;">日</div>
<svg style="left:2042.1px;top:351.9px" width="16" height="16" viewBox="0 0 24 24" fill="none" stroke="#a8abb2" stroke-width="1.3" stroke-linecap="round" stroke-linejoin="round"><path d="M4.5 8.5l7.5 7.5l7.5 -7.5"/></svg>
<div class="fld" style="left:2089.4px;top:335.3px;width:150.0px"></div>
<svg style="left:2100.5px;top:347.5px" width="22.4" height="22.4" viewBox="0 0 24 24" fill="none" stroke="#a8abb2" stroke-width="1.15" stroke-linecap="butt" stroke-linejoin="round"><path d="M4 6.3h16v13h-16z"/><path d="M4 9.9h16"/><path d="M7.6 4.5v3.2"/><path d="M16.4 4.5v3.2"/><path d="M8.3 12.6h1.4"/><path d="M11.4 12.6h1.4"/><path d="M14.5 12.6h1.4"/><path d="M8.3 15.9h1.4"/><path d="M11.4 15.9h1.4"/><path d="M14.5 15.9h1.4"/></svg>
<div class="t" style="left:2130.0px;top:345.9px;font-size:18.6px;line-height:28px;color:#606268;letter-spacing:-.17px;">2025-10-16</div>
<div class="t" style="left:1664.4px;top:413.1px;font-size:15.2px;line-height:23px;color:#565561;letter-spacing:1.55px;">排名</div>
<div class="t" style="left:1787.2px;top:413.1px;font-size:15.2px;line-height:23px;color:#565561;letter-spacing:1.55px;">楼层</div>
<div class="t" style="left:1915.7px;top:413.1px;font-size:15.2px;line-height:23px;color:#565561;letter-spacing:1.55px;">总用能</div>
<div class="t" style="left:2099.2px;top:413.1px;font-size:15.2px;line-height:23px;color:#565561;letter-spacing:1.55px;">相对用能</div>
<div class="a" style="left:0;top:0;width:2304px;height:742.7px;overflow:hidden">
<div class="a" style="left:1644.8px;top:444px;width:615.9px;height:1px;background:#dad9df"></div>
<div class="a" style="left:1644.8px;top:494.3px;width:615.9px;height:1px;background:#dad9df"></div>
<div class="t" style="left:1664.4px;top:456.4px;font-size:18.3px;line-height:27px;color:#716f7b;">1</div>
<div class="t" style="left:1787.2px;top:456.4px;font-size:18.3px;line-height:27px;color:#716f7b;">6楼</div>
<div class="t" style="left:1915.7px;top:455.9px;font-size:18.4px;line-height:28px;color:#716f7b;letter-spacing:0px;">998kWh</div>
<div class="a" style="left:2099.2px;top:465.0px;width:142px;height:9.4px;border-radius:5px;background:#dde5fb"><div style="width:100.0%;height:100%;border-radius:5px;background:#2b5ef0"></div></div>
<div class="a" style="left:1644.8px;top:544.9px;width:615.9px;height:1px;background:#dad9df"></div>
<div class="t" style="left:1664.4px;top:507.0px;font-size:18.3px;line-height:27px;color:#716f7b;">2</div>
<div class="t" style="left:1787.2px;top:507.0px;font-size:18.3px;line-height:27px;color:#716f7b;">2楼</div>
<div class="t" style="left:1915.7px;top:506.5px;font-size:18.4px;line-height:28px;color:#716f7b;letter-spacing:0px;">915kWh</div>
<div class="a" style="left:2099.2px;top:515.6px;width:142px;height:9.4px;border-radius:5px;background:#e8f6ea"><div style="width:92.0%;height:100%;border-radius:5px;background:#55b85e"></div></div>
<div class="a" style="left:1644.8px;top:595.5px;width:615.9px;height:1px;background:#dad9df"></div>
<div class="t" style="left:1664.4px;top:557.6px;font-size:18.3px;line-height:27px;color:#716f7b;">3</div>
<div class="t" style="left:1787.2px;top:557.6px;font-size:18.3px;line-height:27px;color:#716f7b;">8楼</div>
<div class="t" style="left:1915.7px;top:557.1px;font-size:18.4px;line-height:28px;color:#716f7b;letter-spacing:0px;">913kWh</div>
<div class="a" style="left:2099.2px;top:566.2px;width:142px;height:9.4px;border-radius:5px;background:#e6f7fc"><div style="width:91.5%;height:100%;border-radius:5px;background:#52c3e8"></div></div>
<div class="a" style="left:1644.8px;top:646.2px;width:615.9px;height:1px;background:#dad9df"></div>
<div class="t" style="left:1664.4px;top:608.3px;font-size:18.3px;line-height:27px;color:#716f7b;">4</div>
<div class="t" style="left:1787.2px;top:608.3px;font-size:18.3px;line-height:27px;color:#716f7b;">7楼</div>
<div class="t" style="left:1915.7px;top:607.8px;font-size:18.4px;line-height:28px;color:#716f7b;letter-spacing:0px;">700kWh</div>
<div class="a" style="left:2099.2px;top:616.9px;width:142px;height:9.4px;border-radius:5px;background:#ededf0"><div style="width:70.3%;height:100%;border-radius:5px;background:#62626e"></div></div>
<div class="a" style="left:1644.8px;top:696.8px;width:615.9px;height:1px;background:#dad9df"></div>
<div class="t" style="left:1664.4px;top:658.9px;font-size:18.3px;line-height:27px;color:#716f7b;">5</div>
<div class="t" style="left:1787.2px;top:658.9px;font-size:18.3px;line-height:27px;color:#716f7b;">10楼</div>
<div class="t" style="left:1915.7px;top:658.4px;font-size:18.4px;line-height:28px;color:#716f7b;letter-spacing:0px;">556kWh</div>
<div class="a" style="left:2099.2px;top:667.5px;width:142px;height:9.4px;border-radius:5px;background:#fdf0e8"><div style="width:55.8%;height:100%;border-radius:5px;background:#f0953a"></div></div>
<div class="t" style="left:1664.4px;top:709.5px;font-size:18.3px;line-height:27px;color:#716f7b;">6</div>
<div class="t" style="left:1787.2px;top:709.5px;font-size:18.3px;line-height:27px;color:#716f7b;">1楼</div>
<div class="t" style="left:1915.7px;top:709.0px;font-size:18.4px;line-height:28px;color:#716f7b;letter-spacing:0px;">436kWh</div>
<div class="a" style="left:2099.2px;top:718.1px;width:142px;height:9.4px;border-radius:5px;background:#fcebea"><div style="width:43.7%;height:100%;border-radius:5px;background:#d9433e"></div></div>
</div>
<div class="a" style="left:2261.6px;top:406.5px;width:6.4px;height:207.5px;border-radius:4px;background:#c6c7d0"></div>
<div class="a" style="left:2246.5px;top:647.8px;width:50px;height:50.4px;border-radius:8px 0 0 8px;background:#2b5ef0;box-shadow:0 2px 8px rgba(43,94,240,.4)"></div>
<svg style="left:2258.5px;top:659.6px" width="26.4" height="26.4" viewBox="0 0 24 24" fill="none" stroke="#fff" stroke-width="1.5" stroke-linecap="round" stroke-linejoin="round"><path d="M10.325 4.317c.426 -1.756 2.924 -1.756 3.35 0a1.724 1.724 0 0 0 2.573 1.066c1.543 -.94 3.31 .826 2.37 2.37a1.724 1.724 0 0 0 1.065 2.572c1.756 .426 1.756 2.924 0 3.35a1.724 1.724 0 0 0 -1.066 2.573c.94 1.543 -.826 3.31 -2.37 2.37a1.724 1.724 0 0 0 -2.572 1.065c-.426 1.756 -2.924 1.756 -3.35 0a1.724 1.724 0 0 0 -2.573 -1.066c-1.543 .94 -3.31 -.826 -2.37 -2.37a1.724 1.724 0 0 0 -1.065 -2.572c-1.756 -.426 -1.756 -2.924 0 -3.35a1.724 1.724 0 0 0 1.066 -2.573c-.94 -1.543 .826 -3.31 2.37 -2.37c1 .608 2.296 .07 2.572 -1.065z"/><path d="M9 12a3 3 0 1 0 6 0a3 3 0 0 0 -6 0"/></svg>
<div class="t" style="left:370.0px;top:792.2px;font-size:21.6px;line-height:32px;color:#565561;">当日用能趋势</div>
<div class="dot" style="left:508.9px;top:798.8px;width:23.4px;height:23.4px;background:#7ccb84"></div>
<div class="t" style="left:538.6px;top:798.0px;font-size:14.4px;line-height:22px;color:#62c06b;">刚刚</div>
<div class="t" style="left:370.0px;top:823.0px;font-size:15.4px;line-height:23px;color:#716f7b;">模拟数据</div>
<svg style="left:431.3px;top:825.3px" width="18" height="18" viewBox="0 0 24 24" fill="none" stroke="#3a68f0" stroke-width="1.7" stroke-linecap="round" stroke-linejoin="round"><path d="M7 7h-1a2 2 0 0 0 -2 2v9a2 2 0 0 0 2 2h9a2 2 0 0 0 2 -2v-1"/><path d="M20.385 6.585a2.1 2.1 0 0 0 -2.97 -2.97l-8.415 8.385v3h3l8.385 -8.415z"/><path d="M16 5l3 3"/></svg>
<div class="fld" style="left:785.2px;top:794.2px;width:150.0px"></div>
<svg style="left:796.3px;top:806.4px" width="22.4" height="22.4" viewBox="0 0 24 24" fill="none" stroke="#a8abb2" stroke-width="1.15" stroke-linecap="butt" stroke-linejoin="round"><path d="M4 6.3h16v13h-16z"/><path d="M4 9.9h16"/><path d="M7.6 4.5v3.2"/><path d="M16.4 4.5v3.2"/><path d="M8.3 12.6h1.4"/><path d="M11.4 12.6h1.4"/><path d="M14.5 12.6h1.4"/><path d="M8.3 15.9h1.4"/><path d="M11.4 15.9h1.4"/><path d="M14.5 15.9h1.4"/></svg>
<div class="t" style="left:825.8px;top:804.8px;font-size:18.6px;line-height:28px;color:#606268;letter-spacing:-.17px;">2025-10-16</div>
<svg class="cht" style="left:0;top:0" width="2304" height="1296" viewBox="0 0 2304 1296"><line x1="407.4" x2="952.0" y1="918.7" y2="918.7" stroke="#d9d9dd" stroke-width="1.1"/><line x1="407.4" x2="952.0" y1="954.2" y2="954.2" stroke="#d9d9dd" stroke-width="1.1"/><line x1="407.4" x2="952.0" y1="989.7" y2="989.7" stroke="#d9d9dd" stroke-width="1.1"/><line x1="407.4" x2="952.0" y1="1025.2" y2="1025.2" stroke="#d9d9dd" stroke-width="1.1"/><line x1="407.4" x2="952.0" y1="1060.7" y2="1060.7" stroke="#d9d9dd" stroke-width="1.1"/><line x1="407.4" x2="952.0" y1="1096.2" y2="1096.2" stroke="#d9d9dd" stroke-width="1.1"/><line x1="407.4" x2="952.0" y1="1131.7" y2="1131.7" stroke="#d9d9dd" stroke-width="1.1"/><line x1="407.4" x2="407.4" y1="918.7" y2="1131.7" stroke="#d9d9dd" stroke-width="1.1"/><text x="412.6" y="1147.3" text-anchor="end" transform="rotate(-44.5 412.6 1147.3)">0:00</text><line x1="454.8" x2="454.8" y1="918.7" y2="1131.7" stroke="#d9d9dd" stroke-width="1.1"/><text x="460.0" y="1147.3" text-anchor="end" transform="rotate(-44.5 460.0 1147.3)">2:00</text><line x1="502.1" x2="502.1" y1="918.7" y2="1131.7" stroke="#d9d9dd" stroke-width="1.1"/><text x="507.3" y="1147.3" text-anchor="end" transform="rotate(-44.5 507.3 1147.3)">4:00</text><line x1="549.5" x2="549.5" y1="918.7" y2="1131.7" stroke="#d9d9dd" stroke-width="1.1"/><text x="554.7" y="1147.3" text-anchor="end" transform="rotate(-44.5 554.7 1147.3)">6:00</text><line x1="596.8" x2="596.8" y1="918.7" y2="1131.7" stroke="#d9d9dd" stroke-width="1.1"/><text x="602.0" y="1147.3" text-anchor="end" transform="rotate(-44.5 602.0 1147.3)">8:00</text><line x1="644.2" x2="644.2" y1="918.7" y2="1131.7" stroke="#d9d9dd" stroke-width="1.1"/><text x="649.4" y="1147.3" text-anchor="end" transform="rotate(-44.5 649.4 1147.3)">10:00</text><line x1="691.5" x2="691.5" y1="918.7" y2="1131.7" stroke="#d9d9dd" stroke-width="1.1"/><text x="696.7" y="1147.3" text-anchor="end" transform="rotate(-44.5 696.7 1147.3)">12:00</text><line x1="738.9" x2="738.9" y1="918.7" y2="1131.7" stroke="#d9d9dd" stroke-width="1.1"/><text x="744.1" y="1147.3" text-anchor="end" transform="rotate(-44.5 744.1 1147.3)">14:00</text><line x1="786.3" x2="786.3" y1="918.7" y2="1131.7" stroke="#d9d9dd" stroke-width="1.1"/><text x="791.5" y="1147.3" text-anchor="end" transform="rotate(-44.5 791.5 1147.3)">16:00</text><line x1="833.6" x2="833.6" y1="918.7" y2="1131.7" stroke="#d9d9dd" stroke-width="1.1"/><text x="838.8" y="1147.3" text-anchor="end" transform="rotate(-44.5 838.8 1147.3)">18:00</text><line x1="881.0" x2="881.0" y1="918.7" y2="1131.7" stroke="#d9d9dd" stroke-width="1.1"/><text x="886.2" y="1147.3" text-anchor="end" transform="rotate(-44.5 886.2 1147.3)">20:00</text><line x1="928.3" x2="928.3" y1="918.7" y2="1131.7" stroke="#d9d9dd" stroke-width="1.1"/><text x="933.5" y="1147.3" text-anchor="end" transform="rotate(-44.5 933.5 1147.3)">22:00</text><text x="396.2" y="920.4" text-anchor="end">9688</text><text x="396.2" y="955.9" text-anchor="end">8073</text><text x="396.2" y="991.4" text-anchor="end">6458</text><text x="396.2" y="1026.9" text-anchor="end">4844</text><text x="396.2" y="1062.4" text-anchor="end">3229</text><text x="396.2" y="1097.9" text-anchor="end">1614</text><text x="396.2" y="1133.4" text-anchor="end">0</text><clipPath id="clpL"><rect x="405.4" y="912.7" width="546.6" height="225.0"/></clipPath><path clip-path="url(#clpL)" d="M407.4,942.8C415.7,942.8 422.8,1033.3 431.1,1033.3C439.4,1033.3 446.5,1116.8 454.8,1116.8C463.0,1116.8 470.1,999.6 478.4,999.6C486.7,999.6 493.8,1061.7 502.1,1061.7C510.4,1061.7 517.5,1091.9 525.8,1091.9C534.1,1091.9 541.2,1122.1 549.5,1122.1C557.8,1122.1 564.9,1111.4 573.1,1111.4C581.4,1111.4 588.5,944.6 596.8,944.6C605.1,944.6 612.2,968.4 620.5,968.4C628.8,968.4 635.9,953.5 644.2,953.5C652.5,953.5 659.6,941.0 667.9,941.0C676.1,941.0 683.3,974.8 691.5,974.8C699.8,974.8 706.9,1023.4 715.2,1023.4C723.5,1023.4 730.6,990.0 738.9,990.0C747.2,990.0 754.3,1122.1 762.6,1122.1C770.9,1122.1 778.0,1095.5 786.3,1095.5C794.5,1095.5 801.6,977.3 809.9,977.3C818.2,977.3 825.3,997.8 833.6,997.8C841.9,997.8 849.0,963.4 857.3,963.4C865.6,963.4 872.7,1115.0 881.0,1115.0C889.3,1115.0 896.4,1118.5 904.6,1118.5C912.9,1118.5 920.0,986.1 928.3,986.1C936.6,986.1 943.7,1018.4 952.0,1018.4" fill="none" stroke="#6cc173" stroke-width="3.7" stroke-linecap="round" stroke-linejoin="round"/><path clip-path="url(#clpL)" d="M407.4,1071.7C415.7,1071.7 422.8,1014.5 431.1,1014.5C439.4,1014.5 446.5,938.6 454.8,938.6C463.0,938.6 470.1,1041.5 478.4,1041.5C486.7,1041.5 493.8,1111.4 502.1,1111.4C510.4,1111.4 517.5,961.6 525.8,961.6C534.1,961.6 541.2,1019.1 549.5,1019.1C557.8,1019.1 564.9,918.7 573.1,918.7C581.4,918.7 588.5,930.4 596.8,930.4C605.1,930.4 612.2,990.7 620.5,990.7C628.8,990.7 635.9,1009.2 644.2,1009.2C652.5,1009.2 659.6,989.0 667.9,989.0C676.1,989.0 683.3,936.4 691.5,936.4C699.8,936.4 706.9,1077.0 715.2,1077.0C723.5,1077.0 730.6,1022.7 738.9,1022.7C747.2,1022.7 754.3,1072.4 762.6,1072.4C770.9,1072.4 778.0,1102.6 786.3,1102.6C794.5,1102.6 801.6,1107.2 809.9,1107.2C818.2,1107.2 825.3,1013.8 833.6,1013.8C841.9,1013.8 849.0,1123.9 857.3,1123.9C865.6,1123.9 872.7,932.2 881.0,932.2C889.3,932.2 896.4,1074.9 904.6,1074.9C912.9,1074.9 920.0,1057.5 928.3,1057.5C936.6,1057.5 943.7,1116.1 952.0,1116.1" fill="none" stroke="#f0a35c" stroke-width="3.7" stroke-linecap="round" stroke-linejoin="round"/><circle cx="843.3" cy="886.7" r="7.1" fill="#5cb85c"/><text x="857.9" y="891.9000000000001" style="fill:#6d6b77;font-size:14.4px">今日</text><circle cx="902.2" cy="886.7" r="7.1" fill="#f0953a"/><text x="916.8" y="891.9000000000001" style="fill:#6d6b77;font-size:14.4px">昨日</text></svg>
<div class="t" style="left:1022.4px;top:792.2px;font-size:21.6px;line-height:32px;color:#565561;">当月用能趋势</div>
<div class="dot" style="left:1161.1px;top:798.8px;width:23.4px;height:23.4px;background:#7ccb84"></div>
<div class="t" style="left:1190.8px;top:798.0px;font-size:14.4px;line-height:22px;color:#62c06b;">刚刚</div>
<div class="t" style="left:1022.4px;top:823.0px;font-size:15.4px;line-height:23px;color:#716f7b;">模拟数据</div>
<svg style="left:1083.8px;top:825.3px" width="18" height="18" viewBox="0 0 24 24" fill="none" stroke="#3a68f0" stroke-width="1.7" stroke-linecap="round" stroke-linejoin="round"><path d="M7 7h-1a2 2 0 0 0 -2 2v9a2 2 0 0 0 2 2h9a2 2 0 0 0 2 -2v-1"/><path d="M20.385 6.585a2.1 2.1 0 0 0 -2.97 -2.97l-8.415 8.385v3h3l8.385 -8.415z"/><path d="M16 5l3 3"/></svg>
<div class="fld" style="left:1437.0px;top:794.2px;width:150.0px"></div>
<svg style="left:1448.1px;top:806.4px" width="22.4" height="22.4" viewBox="0 0 24 24" fill="none" stroke="#a8abb2" stroke-width="1.15" stroke-linecap="butt" stroke-linejoin="round"><path d="M4 6.3h16v13h-16z"/><path d="M4 9.9h16"/><path d="M7.6 4.5v3.2"/><path d="M16.4 4.5v3.2"/><path d="M8.3 12.6h1.4"/><path d="M11.4 12.6h1.4"/><path d="M14.5 12.6h1.4"/><path d="M8.3 15.9h1.4"/><path d="M11.4 15.9h1.4"/><path d="M14.5 15.9h1.4"/></svg>
<div class="t" style="left:1477.6px;top:804.8px;font-size:18.6px;line-height:28px;color:#606268;letter-spacing:-.17px;">2025-10</div>
<svg class="cht" style="left:0;top:0" width="2304" height="1296" viewBox="0 0 2304 1296"><defs><linearGradient id="gG" x1="0" y1="0" x2="0" y2="1"><stop offset="0" stop-color="#5cb85c" stop-opacity=".42"/><stop offset="1" stop-color="#5cb85c" stop-opacity=".10"/></linearGradient><linearGradient id="gB" x1="0" y1="0" x2="0" y2="1"><stop offset="0" stop-color="#4fc3e6" stop-opacity=".45"/><stop offset="1" stop-color="#4fc3e6" stop-opacity=".10"/></linearGradient></defs><line x1="1077.3" x2="1603.7" y1="918.7" y2="918.7" stroke="#d9d9dd" stroke-width="1.1"/><line x1="1077.3" x2="1603.7" y1="973.1" y2="973.1" stroke="#d9d9dd" stroke-width="1.1"/><line x1="1077.3" x2="1603.7" y1="1027.5" y2="1027.5" stroke="#d9d9dd" stroke-width="1.1"/><line x1="1077.3" x2="1603.7" y1="1081.9" y2="1081.9" stroke="#d9d9dd" stroke-width="1.1"/><line x1="1077.3" x2="1603.7" y1="1136.3" y2="1136.3" stroke="#d9d9dd" stroke-width="1.1"/><line x1="1077.3" x2="1077.3" y1="918.7" y2="1136.3" stroke="#d9d9dd" stroke-width="1.1"/><text x="1082.9" y="1151.5" text-anchor="end" transform="rotate(-45 1082.9 1151.5)">1日</text><line x1="1129.9" x2="1129.9" y1="918.7" y2="1136.3" stroke="#d9d9dd" stroke-width="1.1"/><text x="1135.5" y="1151.5" text-anchor="end" transform="rotate(-45 1135.5 1151.5)">4日</text><line x1="1182.6" x2="1182.6" y1="918.7" y2="1136.3" stroke="#d9d9dd" stroke-width="1.1"/><text x="1188.2" y="1151.5" text-anchor="end" transform="rotate(-45 1188.2 1151.5)">7日</text><line x1="1235.2" x2="1235.2" y1="918.7" y2="1136.3" stroke="#d9d9dd" stroke-width="1.1"/><text x="1240.8" y="1151.5" text-anchor="end" transform="rotate(-45 1240.8 1151.5)">10日</text><line x1="1287.9" x2="1287.9" y1="918.7" y2="1136.3" stroke="#d9d9dd" stroke-width="1.1"/><text x="1293.5" y="1151.5" text-anchor="end" transform="rotate(-45 1293.5 1151.5)">13日</text><line x1="1340.5" x2="1340.5" y1="918.7" y2="1136.3" stroke="#d9d9dd" stroke-width="1.1"/><text x="1346.1" y="1151.5" text-anchor="end" transform="rotate(-45 1346.1 1151.5)">16日</text><line x1="1393.1" x2="1393.1" y1="918.7" y2="1136.3" stroke="#d9d9dd" stroke-width="1.1"/><text x="1398.7" y="1151.5" text-anchor="end" transform="rotate(-45 1398.7 1151.5)">19日</text><line x1="1445.8" x2="1445.8" y1="918.7" y2="1136.3" stroke="#d9d9dd" stroke-width="1.1"/><text x="1451.4" y="1151.5" text-anchor="end" transform="rotate(-45 1451.4 1151.5)">22日</text><line x1="1498.4" x2="1498.4" y1="918.7" y2="1136.3" stroke="#d9d9dd" stroke-width="1.1"/><text x="1504.0" y="1151.5" text-anchor="end" transform="rotate(-45 1504.0 1151.5)">25日</text><line x1="1551.1" x2="1551.1" y1="918.7" y2="1136.3" stroke="#d9d9dd" stroke-width="1.1"/><text x="1556.7" y="1151.5" text-anchor="end" transform="rotate(-45 1556.7 1151.5)">28日</text><line x1="1603.7" x2="1603.7" y1="918.7" y2="1136.3" stroke="#d9d9dd" stroke-width="1.1"/><text x="1609.3" y="1151.5" text-anchor="end" transform="rotate(-45 1609.3 1151.5)">31日</text><text x="1065.4" y="920.4" text-anchor="end">120000</text><text x="1065.4" y="974.8" text-anchor="end">90000</text><text x="1065.4" y="1029.2" text-anchor="end">60000</text><text x="1065.4" y="1083.6" text-anchor="end">30000</text><text x="1065.4" y="1138.0" text-anchor="end">0</text><clipPath id="clpA"><rect x="1075.3" y="912.7" width="530.4000000000001" height="225.5999999999999"/></clipPath><path clip-path="url(#clpA)" d="M1077.3,1044.0C1083.4,1044.0 1088.7,1061.7 1094.8,1061.7C1101.0,1061.7 1106.3,1109.7 1112.4,1109.7C1118.5,1109.7 1123.8,1026.2 1129.9,1026.2C1136.1,1026.2 1141.3,1034.1 1147.5,1034.1C1153.6,1034.1 1158.9,1116.1 1165.0,1116.1C1171.2,1116.1 1176.4,1057.5 1182.6,1057.5C1188.7,1057.5 1194.0,1133.8 1200.1,1133.8C1206.3,1133.8 1211.5,1024.5 1217.7,1024.5C1223.8,1024.5 1229.1,1132.0 1235.2,1132.0C1241.4,1132.0 1246.6,1054.6 1252.8,1054.6C1258.9,1054.6 1264.2,1033.3 1270.3,1033.3C1276.5,1033.3 1281.7,1107.9 1287.9,1107.9C1294.0,1107.9 1299.3,1116.8 1305.4,1116.8C1311.5,1116.8 1316.8,1041.5 1323.0,1041.5C1329.1,1041.5 1334.4,1109.7 1340.5,1109.7C1346.6,1109.7 1351.9,1047.5 1358.0,1047.5C1364.2,1047.5 1369.5,1082.0 1375.6,1082.0C1381.7,1082.0 1387.0,1074.2 1393.1,1074.2C1399.3,1074.2 1404.5,1038.0 1410.7,1038.0C1416.8,1038.0 1422.1,1051.1 1428.2,1051.1C1434.4,1051.1 1439.6,1087.3 1445.8,1087.3C1451.9,1087.3 1457.2,1051.8 1463.3,1051.8C1469.5,1051.8 1474.7,958.8 1480.9,958.8C1487.0,958.8 1492.3,1009.6 1498.4,1009.6C1504.6,1009.6 1509.8,1025.5 1516.0,1025.5C1522.1,1025.5 1527.4,1071.7 1533.5,1071.7C1539.7,1071.7 1544.9,969.4 1551.1,969.4C1557.2,969.4 1562.5,1117.5 1568.6,1117.5C1574.7,1117.5 1580.0,1017.4 1586.2,1017.4C1592.3,1017.4 1597.6,1085.9 1603.7,1085.9L1603.7,1136.3L1077.3,1136.3Z" fill="url(#gG)" stroke="none"/><path clip-path="url(#clpA)" d="M1077.3,1051.1C1083.4,1051.1 1088.7,996.8 1094.8,996.8C1101.0,996.8 1106.3,1013.8 1112.4,1013.8C1118.5,1013.8 1123.8,1059.3 1129.9,1059.3C1136.1,1059.3 1141.3,987.2 1147.5,987.2C1153.6,987.2 1158.9,980.1 1165.0,980.1C1171.2,980.1 1176.4,1014.9 1182.6,1014.9C1188.7,1014.9 1194.0,1006.7 1200.1,1006.7C1206.3,1006.7 1211.5,1065.3 1217.7,1065.3C1223.8,1065.3 1229.1,1017.4 1235.2,1017.4C1241.4,1017.4 1246.6,999.6 1252.8,999.6C1258.9,999.6 1264.2,973.0 1270.3,973.0C1276.5,973.0 1281.7,989.0 1287.9,989.0C1294.0,989.0 1299.3,1096.5 1305.4,1096.5C1311.5,1096.5 1316.8,985.4 1323.0,985.4C1329.1,985.4 1334.4,954.5 1340.5,954.5C1346.6,954.5 1351.9,993.2 1358.0,993.2C1364.2,993.2 1369.5,984.7 1375.6,984.7C1381.7,984.7 1387.0,1089.4 1393.1,1089.4C1399.3,1089.4 1404.5,974.8 1410.7,974.8C1416.8,974.8 1422.1,1046.8 1428.2,1046.8C1434.4,1046.8 1439.6,959.9 1445.8,959.9C1451.9,959.9 1457.2,962.3 1463.3,962.3C1469.5,962.3 1474.7,1042.2 1480.9,1042.2C1487.0,1042.2 1492.3,1044.7 1498.4,1044.7C1504.6,1044.7 1509.8,1089.4 1516.0,1089.4C1522.1,1089.4 1527.4,1090.1 1533.5,1090.1C1539.7,1090.1 1544.9,1044.0 1551.1,1044.0C1557.2,1044.0 1562.5,1081.3 1568.6,1081.3C1574.7,1081.3 1580.0,1098.3 1586.2,1098.3C1592.3,1098.3 1597.6,1016.3 1603.7,1016.3L1603.7,1136.3L1077.3,1136.3Z" fill="url(#gB)" stroke="none"/><path clip-path="url(#clpA)" d="M1077.3,1044.0C1083.4,1044.0 1088.7,1061.7 1094.8,1061.7C1101.0,1061.7 1106.3,1109.7 1112.4,1109.7C1118.5,1109.7 1123.8,1026.2 1129.9,1026.2C1136.1,1026.2 1141.3,1034.1 1147.5,1034.1C1153.6,1034.1 1158.9,1116.1 1165.0,1116.1C1171.2,1116.1 1176.4,1057.5 1182.6,1057.5C1188.7,1057.5 1194.0,1133.8 1200.1,1133.8C1206.3,1133.8 1211.5,1024.5 1217.7,1024.5C1223.8,1024.5 1229.1,1132.0 1235.2,1132.0C1241.4,1132.0 1246.6,1054.6 1252.8,1054.6C1258.9,1054.6 1264.2,1033.3 1270.3,1033.3C1276.5,1033.3 1281.7,1107.9 1287.9,1107.9C1294.0,1107.9 1299.3,1116.8 1305.4,1116.8C1311.5,1116.8 1316.8,1041.5 1323.0,1041.5C1329.1,1041.5 1334.4,1109.7 1340.5,1109.7C1346.6,1109.7 1351.9,1047.5 1358.0,1047.5C1364.2,1047.5 1369.5,1082.0 1375.6,1082.0C1381.7,1082.0 1387.0,1074.2 1393.1,1074.2C1399.3,1074.2 1404.5,1038.0 1410.7,1038.0C1416.8,1038.0 1422.1,1051.1 1428.2,1051.1C1434.4,1051.1 1439.6,1087.3 1445.8,1087.3C1451.9,1087.3 1457.2,1051.8 1463.3,1051.8C1469.5,1051.8 1474.7,958.8 1480.9,958.8C1487.0,958.8 1492.3,1009.6 1498.4,1009.6C1504.6,1009.6 1509.8,1025.5 1516.0,1025.5C1522.1,1025.5 1527.4,1071.7 1533.5,1071.7C1539.7,1071.7 1544.9,969.4 1551.1,969.4C1557.2,969.4 1562.5,1117.5 1568.6,1117.5C1574.7,1117.5 1580.0,1017.4 1586.2,1017.4C1592.3,1017.4 1597.6,1085.9 1603.7,1085.9" fill="none" stroke="#58b862" stroke-width="3.7" stroke-linecap="round" stroke-linejoin="round"/><path clip-path="url(#clpA)" d="M1077.3,1051.1C1083.4,1051.1 1088.7,996.8 1094.8,996.8C1101.0,996.8 1106.3,1013.8 1112.4,1013.8C1118.5,1013.8 1123.8,1059.3 1129.9,1059.3C1136.1,1059.3 1141.3,987.2 1147.5,987.2C1153.6,987.2 1158.9,980.1 1165.0,980.1C1171.2,980.1 1176.4,1014.9 1182.6,1014.9C1188.7,1014.9 1194.0,1006.7 1200.1,1006.7C1206.3,1006.7 1211.5,1065.3 1217.7,1065.3C1223.8,1065.3 1229.1,1017.4 1235.2,1017.4C1241.4,1017.4 1246.6,999.6 1252.8,999.6C1258.9,999.6 1264.2,973.0 1270.3,973.0C1276.5,973.0 1281.7,989.0 1287.9,989.0C1294.0,989.0 1299.3,1096.5 1305.4,1096.5C1311.5,1096.5 1316.8,985.4 1323.0,985.4C1329.1,985.4 1334.4,954.5 1340.5,954.5C1346.6,954.5 1351.9,993.2 1358.0,993.2C1364.2,993.2 1369.5,984.7 1375.6,984.7C1381.7,984.7 1387.0,1089.4 1393.1,1089.4C1399.3,1089.4 1404.5,974.8 1410.7,974.8C1416.8,974.8 1422.1,1046.8 1428.2,1046.8C1434.4,1046.8 1439.6,959.9 1445.8,959.9C1451.9,959.9 1457.2,962.3 1463.3,962.3C1469.5,962.3 1474.7,1042.2 1480.9,1042.2C1487.0,1042.2 1492.3,1044.7 1498.4,1044.7C1504.6,1044.7 1509.8,1089.4 1516.0,1089.4C1522.1,1089.4 1527.4,1090.1 1533.5,1090.1C1539.7,1090.1 1544.9,1044.0 1551.1,1044.0C1557.2,1044.0 1562.5,1081.3 1568.6,1081.3C1574.7,1081.3 1580.0,1098.3 1586.2,1098.3C1592.3,1098.3 1597.6,1016.3 1603.7,1016.3" fill="none" stroke="#4fc3e6" stroke-width="3.7" stroke-linecap="round" stroke-linejoin="round"/><circle cx="1495.4" cy="886.7" r="7.1" fill="#5cb85c"/><text x="1510.7" y="891.9000000000001" style="fill:#6d6b77;font-size:14.4px">当月</text><circle cx="1554.4" cy="886.7" r="7.1" fill="#4fc3e6"/><text x="1569.3" y="891.9000000000001" style="fill:#6d6b77;font-size:14.4px">上月</text></svg>
<div class="t" style="left:1675.2px;top:792.2px;font-size:21.6px;line-height:32px;color:#565561;">当年用能趋势</div>
<div class="dot" style="left:1813.9px;top:798.8px;width:23.4px;height:23.4px;background:#7ccb84"></div>
<div class="t" style="left:1843.6px;top:798.0px;font-size:14.4px;line-height:22px;color:#62c06b;">刚刚</div>
<div class="t" style="left:1675.2px;top:823.0px;font-size:15.4px;line-height:23px;color:#716f7b;">模拟数据</div>
<svg style="left:1736.6px;top:825.3px" width="18" height="18" viewBox="0 0 24 24" fill="none" stroke="#3a68f0" stroke-width="1.7" stroke-linecap="round" stroke-linejoin="round"><path d="M7 7h-1a2 2 0 0 0 -2 2v9a2 2 0 0 0 2 2h9a2 2 0 0 0 2 -2v-1"/><path d="M20.385 6.585a2.1 2.1 0 0 0 -2.97 -2.97l-8.415 8.385v3h3l8.385 -8.415z"/><path d="M16 5l3 3"/></svg>
<div class="fld" style="left:2089.4px;top:794.2px;width:150.0px"></div>
<svg style="left:2100.5px;top:806.4px" width="22.4" height="22.4" viewBox="0 0 24 24" fill="none" stroke="#a8abb2" stroke-width="1.15" stroke-linecap="butt" stroke-linejoin="round"><path d="M4 6.3h16v13h-16z"/><path d="M4 9.9h16"/><path d="M7.6 4.5v3.2"/><path d="M16.4 4.5v3.2"/><path d="M8.3 12.6h1.4"/><path d="M11.4 12.6h1.4"/><path d="M14.5 12.6h1.4"/><path d="M8.3 15.9h1.4"/><path d="M11.4 15.9h1.4"/><path d="M14.5 15.9h1.4"/></svg>
<div class="t" style="left:2130.0px;top:804.8px;font-size:18.6px;line-height:28px;color:#606268;letter-spacing:-.17px;">2025</div>
<svg class="cht" style="left:0;top:0" width="2304" height="1296" viewBox="0 0 2304 1296"><line x1="1736.5" x2="2255.4" y1="889.5" y2="889.5" stroke="#d9d9dd" stroke-width="1.1"/><line x1="1736.5" x2="2255.4" y1="942.5" y2="942.5" stroke="#d9d9dd" stroke-width="1.1"/><line x1="1736.5" x2="2255.4" y1="995.6" y2="995.6" stroke="#d9d9dd" stroke-width="1.1"/><line x1="1736.5" x2="2255.4" y1="1048.6" y2="1048.6" stroke="#d9d9dd" stroke-width="1.1"/><line x1="1736.5" x2="2255.4" y1="1101.7" y2="1101.7" stroke="#d9d9dd" stroke-width="1.1"/><line x1="1736.5" x2="2255.4" y1="1154.7" y2="1154.7" stroke="#d9d9dd" stroke-width="1.1"/><text x="1725.2" y="891.4" text-anchor="end">1000000</text><text x="1725.2" y="944.4" text-anchor="end">800000</text><text x="1725.2" y="997.5" text-anchor="end">600000</text><text x="1725.2" y="1050.5" text-anchor="end">400000</text><text x="1725.2" y="1103.6" text-anchor="end">200000</text><text x="1725.2" y="1156.6" text-anchor="end">0</text><line x1="1759.2" x2="1759.2" y1="886.5" y2="1154.7" stroke="#d9d9dd" stroke-width="1.1"/><line x1="1802.3" x2="1802.3" y1="886.5" y2="1154.7" stroke="#d9d9dd" stroke-width="1.1"/><line x1="1845.5" x2="1845.5" y1="886.5" y2="1154.7" stroke="#d9d9dd" stroke-width="1.1"/><line x1="1888.6" x2="1888.6" y1="886.5" y2="1154.7" stroke="#d9d9dd" stroke-width="1.1"/><line x1="1931.7" x2="1931.7" y1="886.5" y2="1154.7" stroke="#d9d9dd" stroke-width="1.1"/><line x1="1974.9" x2="1974.9" y1="886.5" y2="1154.7" stroke="#d9d9dd" stroke-width="1.1"/><line x1="2018.0" x2="2018.0" y1="886.5" y2="1154.7" stroke="#d9d9dd" stroke-width="1.1"/><line x1="2061.1" x2="2061.1" y1="886.5" y2="1154.7" stroke="#d9d9dd" stroke-width="1.1"/><line x1="2104.2" x2="2104.2" y1="886.5" y2="1154.7" stroke="#d9d9dd" stroke-width="1.1"/><line x1="2147.4" x2="2147.4" y1="886.5" y2="1154.7" stroke="#d9d9dd" stroke-width="1.1"/><line x1="2190.5" x2="2190.5" y1="886.5" y2="1154.7" stroke="#d9d9dd" stroke-width="1.1"/><line x1="2233.6" x2="2233.6" y1="886.5" y2="1154.7" stroke="#d9d9dd" stroke-width="1.1"/><rect x="1749.0" y="1068.8" width="16.8" height="86.9" rx="5.5" fill="#6fc577" stroke="#59b762" stroke-width="1.6"/><text x="1759.2" y="1184.7" text-anchor="middle">1月</text><rect x="1792.1" y="1058.1" width="16.8" height="97.6" rx="5.5" fill="#6fc577" stroke="#59b762" stroke-width="1.6"/><text x="1802.3" y="1184.7" text-anchor="middle">2月</text><rect x="1835.3" y="893.1" width="16.8" height="262.6" rx="5.5" fill="#6fc577" stroke="#59b762" stroke-width="1.6"/><text x="1845.5" y="1184.7" text-anchor="middle">3月</text><rect x="1878.4" y="1078.7" width="16.8" height="77.0" rx="5.5" fill="#6fc577" stroke="#59b762" stroke-width="1.6"/><text x="1888.6" y="1184.7" text-anchor="middle">4月</text><rect x="1921.5" y="895.2" width="16.8" height="260.5" rx="5.5" fill="#6fc577" stroke="#59b762" stroke-width="1.6"/><text x="1931.7" y="1184.7" text-anchor="middle">5月</text><rect x="1964.7" y="1008.1" width="16.8" height="147.6" rx="5.5" fill="#6fc577" stroke="#59b762" stroke-width="1.6"/><text x="1974.9" y="1184.7" text-anchor="middle">6月</text><rect x="2007.8" y="1093.3" width="16.8" height="62.4" rx="5.5" fill="#6fc577" stroke="#59b762" stroke-width="1.6"/><text x="2018.0" y="1184.7" text-anchor="middle">7月</text><rect x="2050.9" y="996.7" width="16.8" height="159.0" rx="5.5" fill="#6fc577" stroke="#59b762" stroke-width="1.6"/><text x="2061.1" y="1184.7" text-anchor="middle">8月</text><rect x="2094.0" y="1127.0" width="16.8" height="28.7" rx="5.5" fill="#6fc577" stroke="#59b762" stroke-width="1.6"/><text x="2104.2" y="1184.7" text-anchor="middle">9月</text><rect x="2137.2" y="1061.0" width="16.8" height="94.7" rx="5.5" fill="#6fc577" stroke="#59b762" stroke-width="1.6"/><text x="2147.4" y="1184.7" text-anchor="middle">10月</text><rect x="2180.3" y="1016.6" width="16.8" height="139.1" rx="5.5" fill="#6fc577" stroke="#59b762" stroke-width="1.6"/><text x="2190.5" y="1184.7" text-anchor="middle">11月</text><rect x="2223.4" y="959.8" width="16.8" height="195.9" rx="5.5" fill="#6fc577" stroke="#59b762" stroke-width="1.6"/><text x="2233.6" y="1184.7" text-anchor="middle">12月</text></svg>
</div></body></html>
